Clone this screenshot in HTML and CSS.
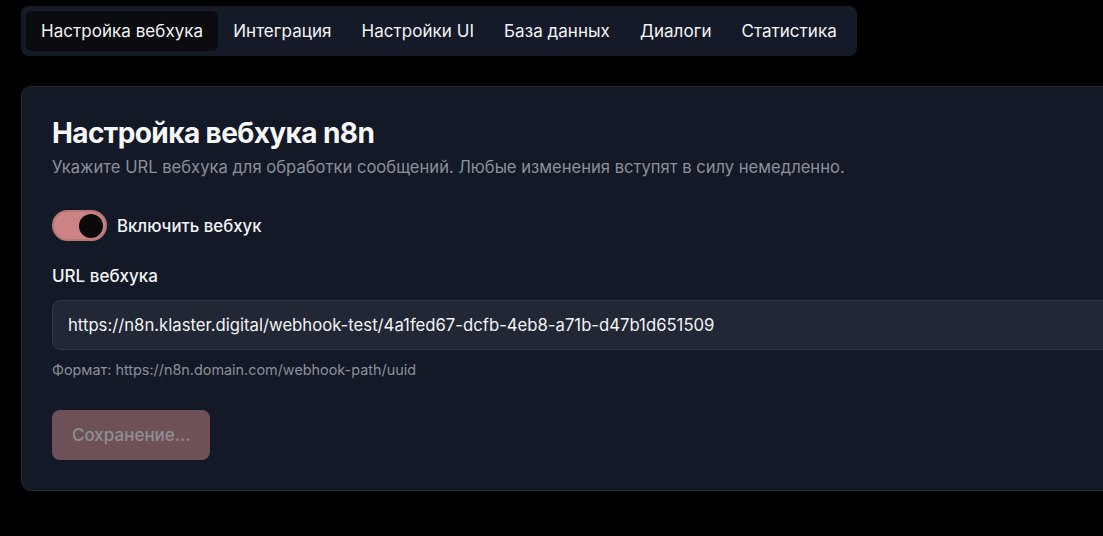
FILE: index.html
```html
<!DOCTYPE html>
<html lang="ru">
<head>
<meta charset="utf-8">
<title>Настройка вебхука</title>
<link rel="stylesheet" href="styles.css">
</head>
<body>
<div class="page">
  <nav class="tabs">
    <div class="tab active">Настройка вебхука</div>
    <div class="tab">Интеграция</div>
    <div class="tab">Настройки UI</div>
    <div class="tab">База данных</div>
    <div class="tab">Диалоги</div>
    <div class="tab">Статистика</div>
  </nav>
  <section class="card">
    <h1 class="title">Настройка вебхука n8n</h1>
    <p class="subtitle">Укажите URL вебхука для обработки сообщений. Любые изменения вступят в силу немедленно.</p>
    <div class="toggle-row">
      <span class="switch"><span class="knob"></span></span>
      <span class="toggle-label">Включить вебхук</span>
    </div>
    <label class="field-label">URL вебхука</label>
    <div class="input">https://n8n.klaster.digital/webhook-test/4a1fed67-dcfb-4eb8-a71b-d47b1d651509</div>
    <p class="hint">Формат: https://n8n.domain.com/webhook-path/uuid</p>
    <button class="btn">Сохранение...</button>
  </section>
</div>
</body>
</html>
```

FILE: styles.css
```css
html, body {
  margin: 0;
  background: #000;
  overflow: hidden;
}
body {
  font-family: Inter, "Noto Sans", sans-serif;
  color: #f3f4f6;
}
.page {
  padding: 6px 0 0 21px;
  width: 1300px;
}
.tabs {
  display: inline-flex;
  background: #151a28;
  border-radius: 8px;
  padding: 5px;
}
.tab {
  height: 40px;
  line-height: 40px;
  padding: 0 15px;
  font-size: 17px;
  letter-spacing: 0.045px;
  color: #f3f4f6;
  border-radius: 6px;
  white-space: nowrap;
}
.tab.active {
  background: #0b0c10;
}
.card {
  margin-top: 30px;
  width: 1200px;
  box-sizing: border-box;
  background: #131926;
  border: 1px solid #232a38;
  border-radius: 10px;
  padding: 28px 30px 30px;
}
.title {
  margin: 0;
  font-size: 28px;
  line-height: 36px;
  font-weight: 700;
  color: #f7f7f8;
  letter-spacing: -0.6px;
}
.subtitle {
  margin: 4px 0 0;
  font-size: 16.6px;
  line-height: 24px;
  color: #8b909a;
}
.toggle-row {
  margin-top: 31px;
  display: flex;
  align-items: center;
  gap: 10px;
}
.switch {
  width: 55px;
  height: 31px;
  box-sizing: border-box;
  border-radius: 16px;
  background: #cc8383;
  border: 2px solid #b97676;
  display: flex;
  align-items: center;
  justify-content: flex-end;
  padding-right: 2px;
}
.knob {
  width: 24px;
  height: 24px;
  border-radius: 50%;
  background: #0a0a0b;
}
.toggle-label {
  font-size: 16.8px;
  font-weight: 500;
  color: #f3f4f6;
}
.field-label {
  display: block;
  margin-top: 23px;
  font-size: 17px;
  line-height: 24px;
  font-weight: 500;
  color: #f3f4f6;
}
.input {
  margin-top: 12px;
  height: 50px;
  box-sizing: border-box;
  background: #212734;
  border: 1px solid #2e3442;
  border-radius: 8px;
  padding: 0 15px;
  line-height: 48px;
  font-size: 16.7px;
  color: #f3f4f6;
  white-space: nowrap;
}
.hint {
  margin: 10px 0 0;
  font-size: 14.4px;
  line-height: 20px;
  color: #8b909a;
}
.btn {
  margin-top: 30px;
  height: 50px;
  padding: 0 20px;
  background: #6e5157;
  border: none;
  border-radius: 8px;
  font-family: Inter, "Noto Sans", sans-serif;
  font-size: 17px;
  font-weight: 500;
  color: #8f8f93;
}
```
